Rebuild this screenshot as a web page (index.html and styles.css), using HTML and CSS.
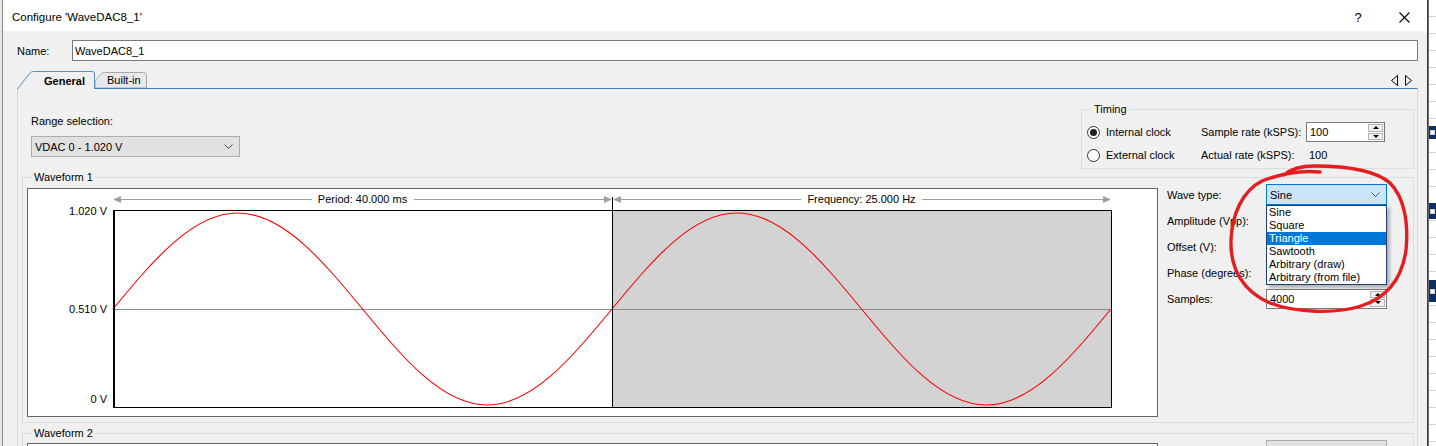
FILE: index.html
```html
<!DOCTYPE html>
<html>
<head>
<meta charset="utf-8">
<title>Configure WaveDAC8_1</title>
<link rel="stylesheet" href="styles.css">
</head>
<body>
<div class="screen">
  <div class="dialog">
    <div class="titlebar">
      <span class="title">Configure 'WaveDAC8_1'</span>
      <span class="tbtn help">?</span>
      <span class="tbtn"><svg width="11" height="11" viewBox="0 0 11 11"><path d="M0.5,0.5 L10.5,10.5 M10.5,0.5 L0.5,10.5" stroke="#000" stroke-width="1.1"/></svg></span>
    </div>
    <div class="content">
      <div class="name-row">
        <span class="name-label">Name:</span>
        <div class="textbox name-box">WaveDAC8_1</div>
      </div>
      <div class="tabstrip">
        <div class="tab tab-active">
          <svg class="tab-shape" width="78" height="18" viewBox="0 0 78 18"><path d="M0.5,18 L12.5,2.5 Q14,0.5 16.5,0.5 L75,0.5 Q77.5,0.5 77.5,3 L77.5,18" fill="#f0f0f0" stroke="#5a8dc6"/></svg>
          <span class="tab-text">General</span>
        </div>
        <div class="tab tab-inactive">
          <svg class="tab-shape" width="52" height="16" viewBox="0 0 52 16"><path d="M0,9 L6,2 Q7.3,0.5 9.5,0.5 L48.5,0.5 Q51.5,0.5 51.5,3.5 L51.5,16 L0,16 Z" fill="#e9e9e9" stroke="#a8a8a8"/></svg>
          <span class="tab-text">Built-in</span>
        </div>
        <div class="tab-scroll">
          <svg width="22" height="11" viewBox="0 0 22 11"><path d="M7.5,0.5 L1.5,5.5 L7.5,10.5 Z M15.5,0.5 L21.5,5.5 L15.5,10.5 Z" fill="none" stroke="#000"/></svg>
        </div>
      </div>
      <div class="page">
        <div class="top-row">
          <div class="range">
            <div class="range-label">Range selection:</div>
            <div class="combo combo-gray range-combo">
              <span>VDAC 0 - 1.020 V</span>
              <svg class="chev" width="9" height="5" viewBox="0 0 9 5"><path d="M0.5,0.5 L4.5,4.5 L8.5,0.5" fill="none" stroke="#444"/></svg>
            </div>
          </div>
          <div class="group timing">
            <div class="gtitle">Timing</div>
            <div class="timing-grid">
              <div class="radio-cell"><span class="radio on"></span><span>Internal clock</span></div>
              <div class="tcell">Sample rate (kSPS):</div>
              <div class="spin tspin"><span class="spin-val">100</span><span class="spinbtns"><span class="sb up"></span><span class="sb down"></span></span></div>
              <div class="radio-cell"><span class="radio"></span><span>External clock</span></div>
              <div class="tcell">Actual rate (kSPS):</div>
              <div class="tcell actual">100</div>
            </div>
          </div>
        </div>

        <div class="group wave">
          <div class="gtitle">Waveform 1</div>
          <div class="wave-inner">
            <div class="chart">
              <svg class="plot" width="1129" height="227" viewBox="0 0 1129 227">
                <rect x="585" y="21" width="498" height="197" fill="#d3d3d3"/>
                <line x1="85" y1="120.5" x2="1083" y2="120.5" stroke="#8c8c8c"/>
                <path d="M85,120 C125.69,70.82 164.6,24 209.75,24 C254.9,24 293.81,70.82 334.5,120 C375.19,169.18 414.1,216 459.25,216 C504.4,216 543.31,169.18 584,120 C624.69,70.82 663.6,24 708.75,24 C753.9,24 792.81,70.82 833.5,120 C874.19,169.18 913.1,216 958.25,216 C1003.4,216 1042.31,169.18 1083,120" fill="none" stroke="#ff0000" stroke-width="1.1"/>
                <path d="M85.5,218.5 V21.5 H1083.5 V218.5 Z" fill="none" stroke="#000"/>
                <line x1="86" y1="21" x2="86" y2="219" stroke="#000" stroke-width="2"/>
                <line x1="584.5" y1="8" x2="584.5" y2="219" stroke="#000"/>
                <g stroke="#a0a0a0">
                  <line x1="90" y1="10.5" x2="284" y2="10.5"/>
                  <line x1="386" y1="10.5" x2="579" y2="10.5"/>
                  <line x1="590" y1="10.5" x2="773" y2="10.5"/>
                  <line x1="894" y1="10.5" x2="1078" y2="10.5"/>
                </g>
                <g fill="#a0a0a0">
                  <polygon points="85,10.5 93,7 93,14"/>
                  <polygon points="584,10.5 576,7 576,14"/>
                  <polygon points="585,10.5 593,7 593,14"/>
                  <polygon points="1083,10.5 1075,7 1075,14"/>
                </g>
                <g class="ptext">
                  <text x="334.5" y="14" text-anchor="middle">Period: 40.000 ms</text>
                  <text x="833.5" y="14" text-anchor="middle">Frequency: 25.000 Hz</text>
                  <text x="79" y="26" text-anchor="end">1.020 V</text>
                  <text x="79" y="124" text-anchor="end">0.510 V</text>
                  <text x="79" y="214" text-anchor="end">0 V</text>
                </g>
              </svg>
            </div>
            <div class="params">
              <div class="prow">
                <span class="plabel">Wave type:</span>
                <div class="combo combo-focus">
                  <span>Sine</span>
                  <svg class="chev" width="9" height="5" viewBox="0 0 9 5"><path d="M0.5,0.5 L4.5,4.5 L8.5,0.5" fill="none" stroke="#555"/></svg>
                  <div class="droplist">
                    <div class="ditem">Sine</div>
                    <div class="ditem">Square</div>
                    <div class="ditem sel">Triangle</div>
                    <div class="ditem">Sawtooth</div>
                    <div class="ditem">Arbitrary (draw)</div>
                    <div class="ditem">Arbitrary (from file)</div>
                  </div>
                </div>
              </div>
              <div class="prow"><span class="plabel">Amplitude (Vpp):</span><div class="spin pspin"></div></div>
              <div class="prow"><span class="plabel">Offset (V):</span><div class="spin pspin"></div></div>
              <div class="prow"><span class="plabel">Phase (degrees):</span><div class="spin pspin"></div></div>
              <div class="prow"><span class="plabel">Samples:</span><div class="spin pspin"><span class="spin-val">4000</span><span class="spinbtns"><span class="sb up"></span><span class="sb down"></span></span></div></div>
            </div>
          </div>
        </div>

        <div class="group wave wave2">
          <div class="gtitle">Waveform 2</div>
          <div class="wave-inner">
            <div class="chart chart2">
              <svg class="plot" width="1129" height="227" viewBox="0 0 1129 227">
                <g class="ptext">
                  <text x="334.5" y="11" text-anchor="middle">Period: 1.000 ms</text>
                  <text x="833.5" y="11" text-anchor="middle">Frequency: 1.000 kHz</text>
                </g>
              </svg>
            </div>
            <div class="params params2">
              <div class="prow">
                <span class="plabel">Wave type:</span>
                <div class="combo combo-gray"><span>Triangle</span></div>
              </div>
            </div>
          </div>
        </div>
      </div>
    </div>
  </div>
  <div class="bgapp">
    <div class="blk b1"><span class="mini"></span></div>
    <div class="blk b2"><span class="mini"></span></div>
    <div class="blk b3"><span class="mini"></span></div>
  </div>
  <svg class="annot" width="1436" height="446" viewBox="0 0 1436 446">
    <path d="M1320,172 C1300,170 1280,174 1262,181 C1242,191 1232,215 1231,240 C1230,270 1244,292 1270,303 C1296,313 1336,314 1361,306 C1386,298 1402,279 1406,250 C1409,220 1403,196 1390,183 C1375,170 1345,166 1314,166 C1300,166 1291,169 1284,175" fill="none" stroke="#e41e20" stroke-width="3.4" stroke-linecap="round" stroke-linejoin="round"/>
  </svg>
</div>
</body>
</html>
```
FILE: styles.css
```css
* { box-sizing: border-box; }
html, body { margin: 0; padding: 0; }
body {
  width: 1436px;
  height: 446px;
  overflow: hidden;
  background: #ffffff;
  font-family: "Liberation Sans", Arial, sans-serif;
  font-size: 11px;
  color: #000;
}
.screen {
  position: relative;
  display: flex;
  width: 1436px;
  height: 446px;
  overflow: hidden;
  background: #e6e6e6;
  padding-left: 2px;
}
.dialog {
  flex: none;
  width: 1426px;
  height: 446px;
  background: #f0f0f0;
  border-left: 1px solid #8c8c8c;
  border-right: 1px solid #3a3a3a;
}

/* title bar */
.titlebar {
  height: 31px;
  background: #fff;
  display: flex;
  align-items: center;
  padding-left: 9px;
  padding-top: 3px;
}
.title { font-size: 11.5px; flex: 1; }
.tbtn {
  width: 46px;
  display: flex;
  justify-content: center;
  align-items: center;
}
.help { font-size: 13px; }

/* content */
.content { padding: 0 9px 0 14px; }
.name-row {
  margin-top: 9px;
  height: 21px;
  display: flex;
  align-items: center;
}
.name-label { width: 55px; flex: none; }
.textbox {
  height: 21px;
  background: #fff;
  border: 1px solid #7a7a7a;
  display: flex;
  align-items: center;
  padding-left: 2px;
}
.name-box { flex: 1; }

/* tabs */
.tabstrip {
  margin-top: 10px;
  height: 17px;
  display: flex;
  align-items: flex-end;
}
.tab { position: relative; display: flex; align-items: center; }
.tab-shape { position: absolute; left: 0; top: 0; }
.tab-text { position: relative; }
.tab-active { width: 78px; height: 18px; margin-bottom: -1px; padding-left: 27px; z-index: 2; font-weight: bold; }
.tab-active .tab-text { padding-top: 1px; }
.tab-inactive { width: 52px; height: 16px; padding-left: 12px; z-index: 1; }
.tab-scroll { margin-left: auto; margin-right: 6px; align-self: center; display: flex; padding-top: 2px; }

/* page */
.page {
  height: 400px;
  border-top: 1px solid #3f7cbf;
  border-left: 1px solid #d6d6d6;
  border-right: 1px solid #d6d6d6;
  padding: 0 3px 0 4px;
}
.top-row {
  display: flex;
  justify-content: space-between;
  align-items: flex-start;
}
.range { margin-left: 9px; margin-top: 25px; }
.range-label { line-height: 14px; }
.combo {
  position: relative;
  height: 21px;
  display: flex;
  align-items: center;
  padding-left: 3px;
  padding-right: 6px;
  border: 1px solid #adadad;
}
.combo .chev { margin-left: auto; }
.combo-gray { background: #e1e1e1; border-color: #adadad; }
.range-combo { margin-top: 8px; width: 209px; }
.combo-focus { background: #cce4f7; border-color: #0078d7; width: 121px; }

/* group boxes */
.group { border: 1px solid #dcdcdc; }
.gtitle {
  width: max-content;
  margin: -7px 0 0 5px;
  padding: 0 2px;
  line-height: 13px;
  background: #f0f0f0;
}
.timing {
  width: 333px;
  margin-top: 20px;
  padding: 0 0 3px 5px;
}
.timing-grid {
  margin-top: 6px;
  display: grid;
  grid-template-columns: 114px 105px 79px;
  grid-template-rows: 20px 20px;
  row-gap: 3px;
  align-items: center;
}
.radio-cell { display: flex; align-items: center; gap: 6px; }
.radio {
  width: 13px;
  height: 13px;
  border-radius: 50%;
  border: 1px solid #333;
  background: #fff;
  display: flex;
  align-items: center;
  justify-content: center;
}
.radio.on::after {
  content: "";
  width: 7px;
  height: 7px;
  border-radius: 50%;
  background: #222;
}
.actual { padding-left: 3px; }

.spin {
  height: 20px;
  background: #fff;
  border: 1px solid #7a7a7a;
  display: flex;
  align-items: center;
  padding: 1px;
}
.spin-val { padding-left: 2px; }
.spinbtns {
  margin-left: auto;
  width: 15px;
  height: 100%;
  display: flex;
  flex-direction: column;
  gap: 1px;
}
.sb {
  flex: 1;
  background: #f0f0f0;
  border: 1px solid #b4b4b4;
  display: flex;
  align-items: center;
  justify-content: center;
}
.sb.up::after {
  content: "";
  border-left: 3px solid transparent;
  border-right: 3px solid transparent;
  border-bottom: 3px solid #000;
}
.sb.down::after {
  content: "";
  border-left: 3px solid transparent;
  border-right: 3px solid transparent;
  border-top: 3px solid #000;
}

/* waveform groups */
.wave { margin-top: 8px; padding: 0 0 5px 4px; }
.wave2 { margin-top: 10px; }
.wave-inner { display: flex; align-items: flex-start; }
.chart {
  flex: none;
  width: 1131px;
  height: 229px;
  margin-top: 4px;
  background: #fff;
  border: 1px solid #646464;
}
.chart2 { margin-top: 3px; }
.plot { display: block; }
.ptext { font-family: "Liberation Sans", Arial, sans-serif; font-size: 11px; fill: #000; }

.params {
  margin-left: 9px;
  display: flex;
  flex-direction: column;
  gap: 5px;
}
.prow { display: flex; align-items: center; height: 21px; }
.plabel { width: 99px; flex: none; }
.pspin { width: 121px; }
.params2 .combo { width: 121px; }

.droplist {
  position: absolute;
  left: -1px;
  top: 20px;
  width: 121px;
  background: #fff;
  border: 1px solid #1d3f6e;
  padding: 0;
  box-shadow: 3px 3px 3px rgba(0, 0, 0, 0.25);
  z-index: 5;
}
.ditem { height: 13px; line-height: 13px; padding-left: 2px; white-space: nowrap; }
.ditem.sel { background: #0078d7; color: #fff; }

/* background application strip */
.bgapp {
  flex: 1;
  height: 446px;
  border-left: 1px solid #6e6e6e;
  background: repeating-linear-gradient(to bottom, #ffffff 0 16px, #d4d4d4 16px 17px);
  display: flex;
  flex-direction: column;
}
.blk { background: #0d2f66; display: flex; align-items: center; padding-left: 1px; }
.mini { width: 5px; height: 5px; border: 1px solid #cfcfcf; background: #fff; }
.b1 { margin-top: 126px; height: 13px; }
.b2 { margin-top: 64px; height: 16px; }
.b3 { margin-top: 61px; height: 22px; }

/* hand-drawn annotation */
.annot { position: absolute; left: 0; top: 0; pointer-events: none; z-index: 10; }
```
